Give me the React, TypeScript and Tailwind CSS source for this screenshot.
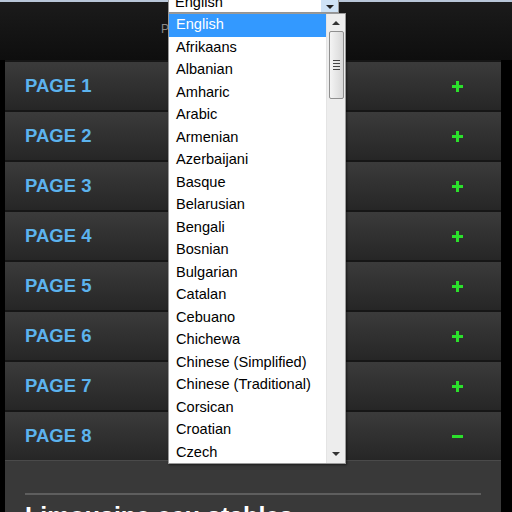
const pages = [1, 2, 3, 4, 5, 6, 7, 8];

const languages = [
  "English",
  "Afrikaans",
  "Albanian",
  "Amharic",
  "Arabic",
  "Armenian",
  "Azerbaijani",
  "Basque",
  "Belarusian",
  "Bengali",
  "Bosnian",
  "Bulgarian",
  "Catalan",
  "Cebuano",
  "Chichewa",
  "Chinese (Simplified)",
  "Chinese (Traditional)",
  "Corsican",
  "Croatian",
  "Czech",
];

function Plus() {
  return (
    <svg width="11" height="11" viewBox="0 0 11 11">
      <rect x="4" y="0" width="3" height="11" fill="#2be02b" />
      <rect x="0" y="4" width="11" height="3" fill="#2be02b" />
    </svg>
  );
}

function Minus() {
  return (
    <svg width="11" height="11" viewBox="0 0 11 11">
      <rect x="0" y="4" width="11" height="3" fill="#2be02b" />
    </svg>
  );
}

function LanguageList() {
  return (
    <div className="absolute left-[168px] top-[13px] flex h-[451px] w-[178px] border border-[#9a9a9a] bg-white shadow-[1px_1px_2px_rgba(0,0,0,0.5)]">
      <ul className="flex-1">
        {languages.map((lang, i) => (
          <li
            key={lang}
            className={
              "flex h-[22.5px] items-center pl-[7px] text-[14.6px] " +
              (i === 0 ? "bg-[#3399ff] text-white" : "text-black")
            }
          >
            {lang}
          </li>
        ))}
      </ul>
      <div className="flex w-[19px] flex-col items-center border-l border-[#e4e4e4] bg-[#ededed]">
        <div className="flex h-[17px] items-center">
          <svg width="8" height="5" viewBox="0 0 8 5">
            <path d="M0 5 L4 1 L8 5 Z" fill="#333" />
          </svg>
        </div>
        <div className="flex h-[68px] w-[15px] items-center justify-center rounded-[2px] border border-[#8f8f8f] bg-gradient-to-r from-[#f4f4f4] to-[#d8d8d8]">
          <div className="flex flex-col gap-[2px]">
            <div className="h-px w-[7px] bg-[#444]" />
            <div className="h-px w-[7px] bg-[#444]" />
            <div className="h-px w-[7px] bg-[#444]" />
            <div className="h-px w-[7px] bg-[#444]" />
          </div>
        </div>
        <div className="flex-1" />
        <div className="flex h-[17px] items-center">
          <svg width="8" height="5" viewBox="0 0 8 5">
            <path d="M0 0 L8 0 L4 4 Z" fill="#333" />
          </svg>
        </div>
      </div>
    </div>
  );
}

export default function App() {
  return (
    <div className="relative h-[512px] w-[512px] overflow-hidden bg-black font-['Liberation_Sans',Arial,sans-serif]">
      <div className="h-[60px] border-t-2 border-[#b8c6d8] bg-gradient-to-b from-[#1b1b1b] to-[#0e0e0e] pl-[161px] pt-[14px]">
        <span className="text-[12px] text-[#8a8a8a]">Powered by Translate</span>
      </div>

      <div className="ml-[5px] w-[496px]">
        {pages.map((p) => (
          <div
            key={p}
            className="flex h-[50px] items-center justify-between border-t-2 border-[#161616] bg-gradient-to-b from-[#3b3b3b] to-[#262626] pl-[20px] pr-[38px]"
          >
            <span className="text-[18.5px] font-bold text-[#5cb3ee]">PAGE {p}</span>
            {p === 8 ? <Minus /> : <Plus />}
          </div>
        ))}
        <div className="h-[60px] border-t border-[#4a4a4a] bg-[#393939] px-[20px] pt-[32px]">
          <div className="h-[2px] bg-[#5e5e5e]" />
          <h2 className="mt-[6px] text-[25px] font-bold leading-[30px] text-white">Limousine ecu stables</h2>
        </div>
      </div>

      <div className="absolute left-[168px] top-[-8px] flex h-[21px] w-[171px] border border-[#9a9a9a] bg-white">
        <span className="flex-1 pl-[6px] text-[14.6px] leading-[19px] text-black">English</span>
        <div className="flex w-[17px] items-center justify-center bg-[#cfe3f6] pt-[10px]">
          <svg width="8" height="5" viewBox="0 0 8 5">
            <path d="M0 0 L8 0 L4 4 Z" fill="#222" />
          </svg>
        </div>
      </div>

      <LanguageList />
    </div>
  );
}
